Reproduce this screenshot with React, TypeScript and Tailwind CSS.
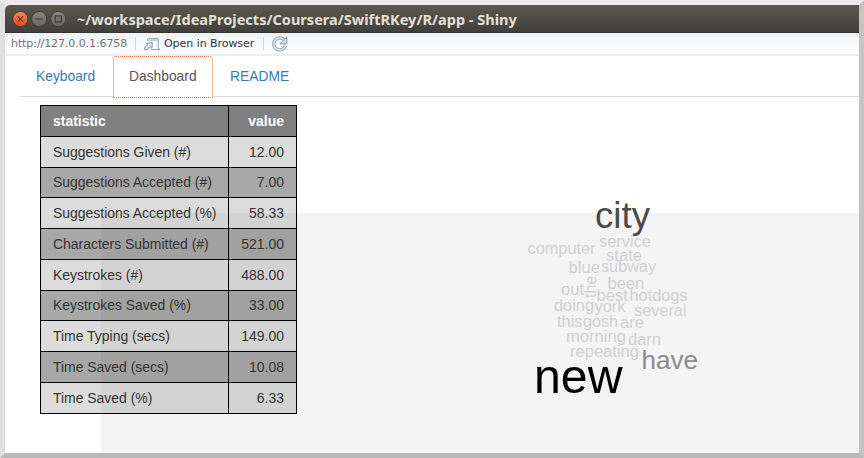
import React from "react";

const rows: [string, string][] = [
  ["Suggestions Given (#)", "12.00"],
  ["Suggestions Accepted (#)", "7.00"],
  ["Suggestions Accepted (%)", "58.33"],
  ["Characters Submitted (#)", "521.00"],
  ["Keystrokes (#)", "488.00"],
  ["Keystrokes Saved (%)", "33.00"],
  ["Time Typing (secs)", "149.00"],
  ["Time Saved (secs)", "10.08"],
  ["Time Saved (%)", "6.33"],
];

type Word = { text: string; x: number; y: number; w: number; size?: number; fill?: string; rotate?: boolean };

const words: Word[] = [
  { text: "city", x: 595, y: 228.3, w: 55, size: 36.5, fill: "#4a4a4a" },
  { text: "service", x: 599, y: 247, w: 52 },
  { text: "computer", x: 527.5, y: 254, w: 68 },
  { text: "state", x: 606, y: 260.6, w: 36 },
  { text: "blue", x: 568.5, y: 272.6, w: 31.5 },
  { text: "subway", x: 601, y: 272, w: 55 },
  { text: "the", x: 596.3, y: 298, w: 22, rotate: true },
  { text: "been", x: 607.5, y: 288.5, w: 36.5 },
  { text: "out", x: 561, y: 294.6, w: 23 },
  { text: "best", x: 596.5, y: 301.4, w: 31.5 },
  { text: "hotdogs", x: 629.5, y: 300.5, w: 58 },
  { text: "doing", x: 554, y: 311.3, w: 40 },
  { text: "york", x: 594.5, y: 311.7, w: 31 },
  { text: "several", x: 634, y: 316, w: 52.5 },
  { text: "this", x: 557, y: 327, w: 25.5 },
  { text: "gosh", x: 583, y: 327, w: 35 },
  { text: "are", x: 620, y: 328, w: 24 },
  { text: "morning", x: 566, y: 342, w: 60 },
  { text: "darn", x: 628, y: 345, w: 33 },
  { text: "repeating", x: 570, y: 357, w: 69 },
  { text: "have", x: 641.5, y: 368.7, w: 56.5, size: 26.5, fill: "#8c8c8c" },
  { text: "new", x: 534, y: 392.6, w: 88.5, size: 48, fill: "#000" },
];

function WindowButtons() {
  return (
    <svg width="56" height="20" viewBox="0 0 56 20" className="shrink-0">
      <defs>
        <linearGradient id="close" x1="0" y1="0" x2="0" y2="1">
          <stop offset="0" stopColor="#f58560" />
          <stop offset="1" stopColor="#e54b1f" />
        </linearGradient>
        <linearGradient id="grey" x1="0" y1="0" x2="0" y2="1">
          <stop offset="0" stopColor="#88867e" />
          <stop offset="1" stopColor="#68665f" />
        </linearGradient>
      </defs>
      <circle cx="9.3" cy="10" r="7.6" fill="url(#close)" stroke="#3b3a35" strokeWidth="0.9" />
      <circle cx="28.3" cy="10" r="7.6" fill="url(#grey)" stroke="#3b3a35" strokeWidth="0.9" />
      <circle cx="47.3" cy="10" r="7.6" fill="url(#grey)" stroke="#3b3a35" strokeWidth="0.9" />
      <path d="M6.7 7.4l5.2 5.2M11.9 7.4l-5.2 5.2" stroke="#6b2a16" strokeWidth="1.3" />
      <path d="M24.8 10h7" stroke="#3d3c37" strokeWidth="1.2" />
      <rect x="44.2" y="7" width="6.2" height="6" fill="none" stroke="#3d3c37" strokeWidth="1.2" />
    </svg>
  );
}

function OpenIcon() {
  return (
    <svg width="18" height="14" viewBox="0 0 18 14" className="shrink-0">
      <path d="M4.5 4V2.3Q4.5 1.3 5.5 1.3H14.2Q15.2 1.3 15.2 2.3V10.5Q15.2 12.5 17 12.5H8" fill="#f8fafc" stroke="#93a3b7" strokeWidth="1" />
      <path d="M5 2h9.8v2H5z" fill="#b9d3e4" />
      <path d="M1.2 12.7Q1 9 4.8 7.8L3.4 6.3 9.3 5.5 9 11.3 7.2 9.8Q4.6 10.6 4.8 12.7Z" fill="#dce5ed" stroke="#8190a6" strokeWidth="0.9" />
    </svg>
  );
}

function RefreshIcon() {
  return (
    <svg width="16" height="16" viewBox="0 0 16 16" className="shrink-0">
      <path d="M13.6 9.5A6 6 0 1 1 11.8 3.5" fill="none" stroke="#8f9fb5" strokeWidth="3.2" />
      <path d="M13.6 9.5A6 6 0 1 1 11.8 3.5" fill="none" stroke="#e2e9f0" strokeWidth="1.4" />
      <path d="M14.8 1.2V8H7.8L10 5.7Z" fill="#d4dde8" stroke="#8797af" strokeWidth="0.9" />
    </svg>
  );
}

function WordCloud() {
  return (
    <svg width="758" height="240" viewBox="101 213 758 240" overflow="visible" className="absolute right-0 bottom-0 bg-[#f4f4f4]">
      {words.map((w) => (
        <text
          key={w.text}
          x={w.x}
          y={w.y}
          textLength={w.w}
          lengthAdjust="spacingAndGlyphs"
          fontSize={w.size ?? 16}
          fill={w.fill ?? "#d0d0d0"}
          transform={w.rotate ? `rotate(-90 ${w.x} ${w.y})` : undefined}
        >
          {w.text}
        </text>
      ))}
    </svg>
  );
}

export default function App() {
  return (
    <div className="h-[458px] w-[864px] overflow-hidden border-[5px] border-t-[#ececec] border-r-[#c4c4c4] border-b-[#b9b9b9] border-l-[#dfdfdf] bg-white font-['Liberation_Sans',Arial,sans-serif]">
      <div className="bg-[#e5e5e5]">
        <header className="flex h-7 items-center rounded-tl-[5px] border-b border-[#35342f] bg-linear-to-b from-[#5b594f] to-[#403f3a] pl-[6px]">
          <WindowButtons />
          <h1 className="ml-[10px] pt-px font-['Noto_Sans',sans-serif] text-[14.5px] leading-5 font-bold tracking-[0.02px] whitespace-nowrap text-[#e4e0d8]">
            ~/workspace/IdeaProjects/Coursera/SwiftRKey/R/app - Shiny
          </h1>
        </header>
      </div>
      <div className="flex h-[23px] items-center border-b-2 border-[#eeeff1] bg-linear-to-b from-[#f0f2f5] to-[#fdfefe] pl-[6px] font-['DejaVu_Sans',sans-serif] text-[11px] text-[#747474]">
        <span className="w-[124px] pt-px tracking-[-0.08px] whitespace-nowrap">http://127.0.0.1:6758</span>
        <span className="h-3.5 w-px bg-[#d2d5d9]" />
        <span className="ml-[7px]"><OpenIcon /></span>
        <span className="ml-[3px] w-[99px] pt-px tracking-[-0.05px] whitespace-nowrap text-[#333]">Open in Browser</span>
        <span className="h-3.5 w-px bg-[#d2d5d9]" />
        <span className="ml-[8px]"><RefreshIcon /></span>
      </div>
      <main className="relative h-[397px]">
        <nav className="ml-[15px] flex h-[41px] border-b border-[#dddddd] text-[14.4px] leading-[40px] text-[#337ab7]">
          <a className="w-[93px] pl-4"><span className="inline-block origin-left scale-x-[0.96]">Keyboard</span></a>
          <a className="h-[42px] w-[100px] rounded-t-[3px] border border-dotted border-[#e9703f] bg-white pl-[15px] leading-[38px] text-[#555]"><span className="inline-block origin-left scale-x-[0.96]">Dashboard</span></a>
          <a className="pl-[17px]"><span className="inline-block origin-left scale-x-[0.96]">README</span></a>
        </nav>
        <WordCloud />
        <table className="relative mt-2 ml-[35px] w-[256px] table-fixed border-collapse text-[13.95px] leading-5 text-[#333]">
          <colgroup>
            <col className="w-[188px]" />
            <col className="w-[68px]" />
          </colgroup>
          <thead>
            <tr className="h-[30.75px] bg-[#808080] text-white">
              <th className="border border-black pl-3 text-left font-bold">statistic</th>
              <th className="border border-black pr-3 text-right font-bold">value</th>
            </tr>
          </thead>
          <tbody>
            {rows.map(([label, value]) => (
              <tr key={label} className="h-[30.75px] odd:bg-[#3d3d3d]/18 even:bg-black/34">
                <td className="border border-black pl-3 whitespace-nowrap">{label}</td>
                <td className="border border-black pr-3 text-right">{value}</td>
              </tr>
            ))}
          </tbody>
        </table>
      </main>
    </div>
  );
}
